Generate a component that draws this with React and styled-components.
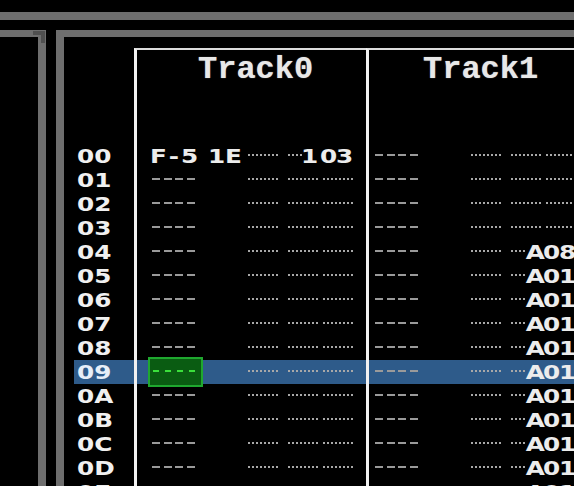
import React from "react";
import styled, { createGlobalStyle } from "styled-components";

const GlobalStyle = createGlobalStyle`
  html, body {
    margin: 0;
    padding: 0;
    background: #000;
  }
  #root {
    width: 574px;
    height: 486px;
    overflow: hidden;
  }
`;

const GRAY = "#6e6e6e";
const BEVEL = "#4f4f4f";
const LINE = "#f2f2f2";
const DOT = "#a8a8a8";

const Screen = styled.div`
  width: 574px;
  height: 486px;
  overflow: hidden;
  background: #000;
  display: flex;
  flex-direction: column;
`;

const TopStrip = styled.div`
  flex-shrink: 0;
  margin-top: 12px;
  height: 8px;
  background: ${GRAY};
`;

const Panels = styled.div`
  flex: 1;
  min-height: 0;
  display: flex;
  gap: 10px;
  margin-top: 10px;
`;

const SidePanel = styled.div`
  position: relative;
  flex-shrink: 0;
  width: 38px;
  border-top: 7px solid ${GRAY};
  border-right: 8px solid ${GRAY};
`;

const MainPanel = styled.div`
  position: relative;
  flex: 1;
  min-width: 0;
  overflow: hidden;
  border-top: 7px solid ${GRAY};
  border-left: 8px solid ${GRAY};
  padding: 11px 0 0 10px;
`;

const Corner = styled.div`
  position: absolute;
  top: -6px;
  width: 12px;
  height: 12px;
  box-sizing: border-box;
  border-top: 4px solid ${BEVEL};
  ${(p) =>
    p.$side === "right"
      ? `right: -7px; border-right: 4px solid ${BEVEL};`
      : `left: -4px; border-left: 4px solid ${BEVEL};`}
`;

const HeaderRow = styled.div`
  display: flex;
  height: 96px;
`;

const LabelSpacer = styled.div`
  flex-shrink: 0;
  width: 60px;
`;

const TrackHead = styled.div`
  flex-shrink: 0;
  width: 232px;
  box-sizing: border-box;
  border-left: 3px solid ${LINE};
  border-top: 2px solid #dcdcdc;
  padding: 2px 0 0 ${(p) => p.$indent}px;
  font: bold 32px/36px "Liberation Mono", "DejaVu Sans Mono", monospace;
  color: #e8e8e8;
  white-space: nowrap;
  text-shadow: 0 0 1px rgba(255, 255, 255, 0.6);
`;

const Row = styled.div`
  display: flex;
  height: 24px;
  background: ${(p) => (p.$active ? "#2e5b8a" : "transparent")};
`;

const RowLabel = styled.div`
  flex-shrink: 0;
  width: 60px;
  box-sizing: border-box;
  padding-left: 3px;
  display: flex;
  align-items: center;
`;

const LabelText = styled.span`
  display: inline-block;
  transform: scaleX(1.3);
  transform-origin: left center;
  font: bold 19px/24px "DejaVu Sans", sans-serif;
  color: ${(p) => (p.$active ? "#e6eef8" : "#f0f0f0")};
`;

const TrackCell = styled.div`
  flex-shrink: 0;
  width: 232px;
  box-sizing: border-box;
  border-left: 3px solid ${LINE};
  display: flex;
  align-items: center;
  padding-left: ${(p) => p.$pad}px;
`;

const Field = styled.div`
  position: relative;
  flex-shrink: 0;
  display: flex;
  align-items: center;
  height: 24px;
  width: ${(p) => p.$w}px;
  margin-right: ${(p) => p.$gap}px;
`;

/* one character slot; an empty slot is drawn as four dots */
const CharCell = styled.span`
  position: relative;
  flex: 0 0 16px;
  width: 16px;
  height: 24px;
  display: flex;
  align-items: center;
  justify-content: center;
  ${(p) =>
    p.$empty &&
    `
    background-image: repeating-linear-gradient(90deg, ${DOT} 0px, ${DOT} 2px, rgba(0,0,0,0) 2px, rgba(0,0,0,0) 4px);
    background-size: 16px 2px;
    background-position: 0 10px;
    background-repeat: no-repeat;
  `}
`;

const Ink = styled.span`
  display: inline-block;
  transform: translateX(${(p) => p.$shift}px) scaleX(1.3);
  font: bold 19px/24px "DejaVu Sans", sans-serif;
  color: #ececec;
`;

const NoteDashes = styled.span`
  display: block;
  width: 46px;
  height: 2px;
  margin-bottom: 2px;
  background-image: repeating-linear-gradient(
    90deg,
    #9a9a9a 0px,
    #9a9a9a 8px,
    transparent 8px,
    transparent 11.6px
  );
`;

const Cursor = styled.div`
  position: absolute;
  z-index: 2;
  left: -4px;
  top: -3px;
  width: 55px;
  height: 30px;
  box-sizing: border-box;
  border: 2px solid #1fa82f;
  background: #0a5c12;
  display: flex;
  align-items: center;
  padding-left: 3px;
`;

const CursorDashes = styled.span`
  display: block;
  width: 44px;
  height: 2px;
  margin-bottom: 2px;
  background-image: repeating-linear-gradient(
    90deg,
    #3be03b 0px,
    #3be03b 6px,
    transparent 6px,
    transparent 12px
  );
`;

const ROWS = Array.from({ length: 16 }, (_, i) =>
  i.toString(16).toUpperCase().padStart(2, "0")
);
const CURSOR_ROW = 9;

const TRACKS = [
  {
    name: "Track0",
    indent: 61,
    pad: 15,
    data: (i) =>
      i === 0 ? { note: "F-5", ins: "1E", vol: "", eff: ".1", val: "03" } : {},
  },
  {
    name: "Track1",
    indent: 54,
    pad: 6,
    data: (i) => {
      if (i < 4) return {};
      return { eff: ".A", val: i === 4 ? "08" : "01" };
    },
  },
];

const Chars = ({ text }) => (
  <>
    {text.split("").map((c, k) =>
      c === "." ? (
        <CharCell key={k} $empty />
      ) : (
        <CharCell key={k}>
          <Ink $shift={c === "A" ? 0 : -2}>{c}</Ink>
        </CharCell>
      )
    )}
  </>
);

const TrackRow = ({ track, index }) => {
  const d = track.data(index);
  const cursor = track.name === "Track0" && index === CURSOR_ROW;
  return (
    <TrackCell $pad={track.pad}>
      <Field $w={46} $gap={13}>
        {d.note ? <Chars text={d.note} /> : <NoteDashes />}
        {cursor && (
          <Cursor>
            <CursorDashes />
          </Cursor>
        )}
      </Field>
      <Field $w={30} $gap={7}>
        {d.ins && <Chars text={d.ins} />}
      </Field>
      <Field $w={32} $gap={8}>
        <Chars text={d.vol || ".."} />
      </Field>
      <Field $w={32} $gap={3}>
        <Chars text={d.eff || ".."} />
      </Field>
      <Field $w={32} $gap={0}>
        <Chars text={d.val || ".."} />
      </Field>
    </TrackCell>
  );
};

export default function App() {
  return (
    <Screen>
      <GlobalStyle />
      <TopStrip />
      <Panels>
        <SidePanel>
          <Corner $side="right" />
        </SidePanel>
        <MainPanel>
          <Corner $side="left" />
          <HeaderRow>
            <LabelSpacer />
            {TRACKS.map((t) => (
              <TrackHead key={t.name} $indent={t.indent}>
                {t.name}
              </TrackHead>
            ))}
          </HeaderRow>
          {ROWS.map((r, i) => (
            <Row key={r} $active={i === CURSOR_ROW}>
              <RowLabel>
                <LabelText $active={i === CURSOR_ROW}>{r}</LabelText>
              </RowLabel>
              {TRACKS.map((t) => (
                <TrackRow key={t.name} track={t} index={i} />
              ))}
            </Row>
          ))}
        </MainPanel>
      </Panels>
    </Screen>
  );
}
